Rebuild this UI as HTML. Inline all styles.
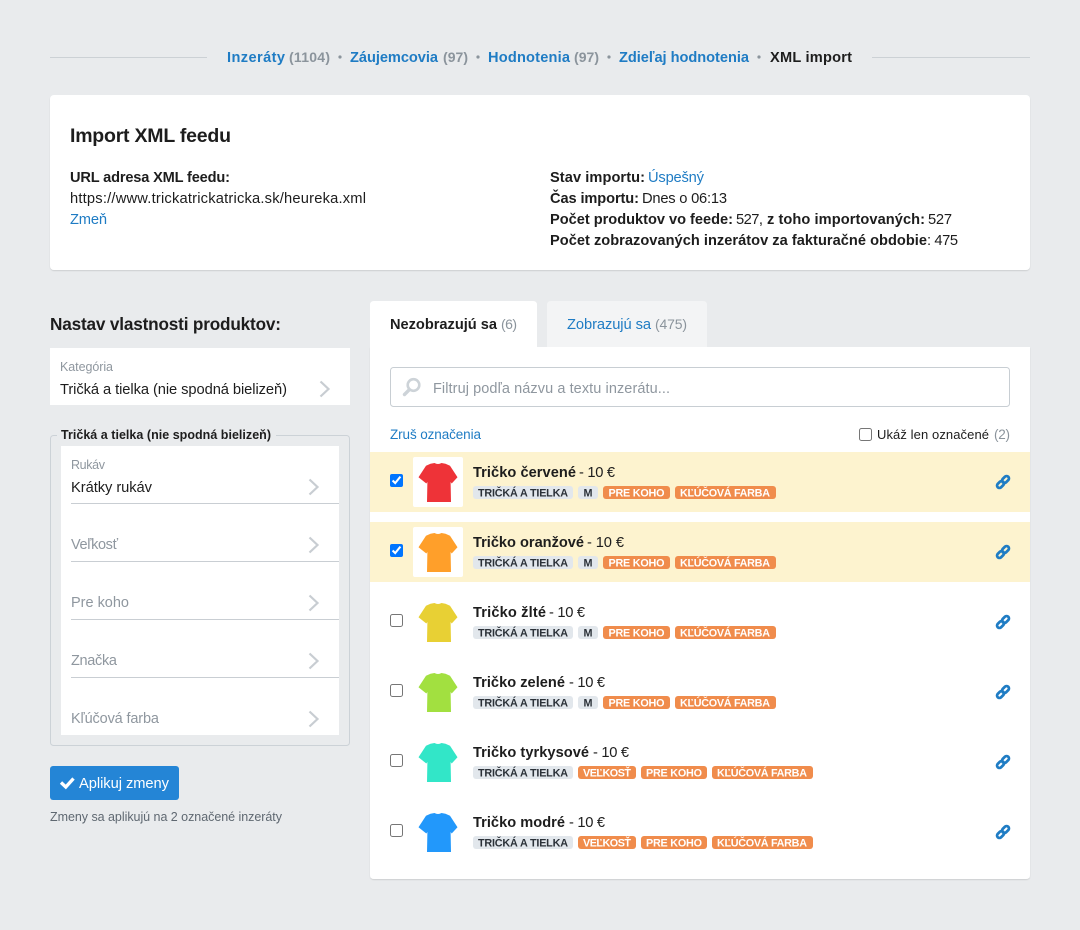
<!DOCTYPE html>
<html lang="sk"><head><meta charset="utf-8"><title>Import XML feedu</title>
<style>
html,body{margin:0;padding:0;width:1080px;height:930px;overflow:hidden;background:#e9ebed}
svg{position:absolute;left:0;top:0}
text{font-family:"Liberation Sans",sans-serif;font-size:14.7px;fill:#1d1d1d}
.b{font-weight:700;font-size:14.6px}
.l{fill:#1f7cc4}
.g{fill:#8b949c;font-size:14px}
.s{font-size:12.5px}
.t{font-size:10.8px;font-weight:700;fill:#2b3138}
.o{font-size:10.8px;font-weight:700;fill:#fff}
.p{fill:#8f979f;font-size:14.5px}
.chev{fill:none;stroke:#c8cdd2;stroke-width:2.2}
.cbx{position:absolute;margin:0;width:13px;height:13px;left:390px}
</style></head><body>
<svg width="1080" height="930" viewBox="0 0 1080 930" xmlns="http://www.w3.org/2000/svg">
<defs>
<symbol id="shirt" viewBox="0 0 50 50" overflow="visible"><path d="M17.5 6.8 L21.5 6 Q25 8 28.5 6 L32.5 6.8 L37 8.8 L44.5 20.3 L38.7 26.5 L37.6 25 L38 45 L14 45 L14.4 25 L13.3 26.5 L5.5 20.3 L13 8.8Z"/></symbol>
<symbol id="link" viewBox="0 0 14 14" overflow="visible"><g fill="none" stroke="#1f7cc4" stroke-width="2.7"><rect x="5.6" y="2.1" width="7.8" height="4.8" rx="2.4" transform="rotate(-45 9.5 4.5)"/><rect x="0.6" y="7.1" width="7.8" height="4.8" rx="2.4" transform="rotate(-45 4.5 9.5)"/></g></symbol>
<symbol id="tags1" viewBox="0 0 400 20" overflow="visible"><rect x="0" y="0" width="100" height="13" rx="3" fill="#e2e7ec"/><text class="t" x="5" y="10.5" textLength="90">TRIČKÁ A TIELKA</text><rect x="105" y="0" width="20" height="13" rx="3" fill="#e2e7ec"/><text class="t" x="110.5" y="10.5" textLength="9.5">M</text><rect x="130" y="0" width="67" height="13" rx="3" fill="#f08c4c"/><text class="o" x="135.5" y="10.5" textLength="56">PRE KOHO</text><rect x="202" y="0" width="101" height="13" rx="3" fill="#f08c4c"/><text class="o" x="207" y="10.5" textLength="90">KĽÚČOVÁ FARBA</text></symbol>
<symbol id="tags2" viewBox="0 0 400 20" overflow="visible"><rect x="0" y="0" width="100" height="13" rx="3" fill="#e2e7ec"/><text class="t" x="5" y="10.5" textLength="90">TRIČKÁ A TIELKA</text><rect x="105" y="0" width="58" height="13" rx="3" fill="#f08c4c"/><text class="o" x="110" y="10.5" textLength="48">VEĽKOSŤ</text><rect x="168" y="0" width="66" height="13" rx="3" fill="#f08c4c"/><text class="o" x="173" y="10.5" textLength="56">PRE KOHO</text><rect x="239" y="0" width="101" height="13" rx="3" fill="#f08c4c"/><text class="o" x="244" y="10.5" textLength="90">KĽÚČOVÁ FARBA</text></symbol>
<filter id="sh" x="-2%" y="-5%" width="104%" height="110%"><feDropShadow dx="0" dy="1" stdDeviation="0.6" flood-color="#000" flood-opacity=".12"/></filter>
</defs>

<!-- top nav -->
<rect x="50" y="57" width="157" height="1" fill="#ccd1d5"/><rect x="872" y="57" width="158" height="1" fill="#ccd1d5"/>
<text class="b l" x="227" y="62" textLength="58">Inzeráty</text><text class="b g" x="289" y="62" textLength="41">(1104)</text>
<circle cx="340" cy="57" r="1.6" fill="#8b949c"/>
<text class="b l" x="350" y="62" textLength="88">Záujemcovia</text><text class="b g" x="443" y="62" textLength="25">(97)</text>
<circle cx="478" cy="57" r="1.6" fill="#8b949c"/>
<text class="b l" x="488" y="62" textLength="82">Hodnotenia</text><text class="b g" x="574" y="62" textLength="25">(97)</text>
<circle cx="609" cy="57" r="1.6" fill="#8b949c"/>
<text class="b l" x="619" y="62" textLength="130">Zdieľaj hodnotenia</text>
<circle cx="759" cy="57" r="1.6" fill="#8b949c"/>
<text class="b" x="770" y="62" textLength="82">XML import</text>

<!-- import card -->
<rect x="50" y="95" width="980" height="175" rx="4" fill="#fff" filter="url(#sh)"/>
<text class="b" style="font-size:19.5px" x="70" y="142" textLength="161">Import XML feedu</text>
<text class="b" x="70" y="182" textLength="160">URL adresa XML feedu:</text>
<text x="70" y="203" textLength="296">https://www.trickatrickatricka.sk/heureka.xml</text>
<text class="l" x="70" y="224" textLength="37">Zmeň</text>
<text class="b" x="550" y="182" textLength="95">Stav importu:</text><text class="l" x="648" y="182" textLength="56">Úspešný</text>
<text class="b" x="550" y="203" textLength="89">Čas importu:</text><text x="642" y="203" textLength="85">Dnes o 06:13</text>
<text class="b" x="550" y="224" textLength="183">Počet produktov vo feede:</text><text x="736" y="224" textLength="27">527,</text><text class="b" x="767" y="224" textLength="158">z toho importovaných:</text><text x="928" y="224" textLength="24">527</text>
<text class="b" x="550" y="245" textLength="377">Počet zobrazovaných inzerátov za fakturačné obdobie</text><text x="927" y="245" textLength="31">: 475</text>

<!-- left column -->
<text class="b" style="font-size:17.2px" x="50" y="330" textLength="231">Nastav vlastnosti produktov:</text>
<rect x="50" y="348" width="300" height="57" fill="#fff"/>
<text class="s p" style="font-size:12.5px" x="60" y="371" textLength="53">Kategória</text>
<text x="60" y="394" textLength="227">Tričká a tielka (nie spodná bielizeň)</text>
<path class="chev" d="M320.5 381.5 L328.5 389 L320.5 396.5"/>

<rect x="50.5" y="435.5" width="299" height="310" rx="3" fill="none" stroke="#ccd2d7"/>
<rect x="57" y="428" width="219" height="14" fill="#e9ebed"/>
<text class="b" style="font-size:12.5px" x="61" y="439" textLength="210">Tričká a tielka (nie spodná bielizeň)</text>
<rect x="61" y="446" width="278" height="289" fill="#fff"/>
<text class="s p" style="font-size:12.5px" x="71" y="469" textLength="34">Rukáv</text>
<text x="71" y="492" textLength="81">Krátky rukáv</text>
<rect x="71" y="503" width="268" height="1" fill="#c9ced3"/>
<path class="chev" d="M309.5 479.5 L317.5 487 L309.5 494.5"/>
<text class="p" x="71" y="549" textLength="47">Veľkosť</text>
<rect x="71" y="561" width="268" height="1" fill="#c9ced3"/>
<path class="chev" d="M309.5 537.5 L317.5 545 L309.5 552.5"/>
<text class="p" x="71" y="607" textLength="58">Pre koho</text>
<rect x="71" y="619" width="268" height="1" fill="#c9ced3"/>
<path class="chev" d="M309.5 595.5 L317.5 603 L309.5 610.5"/>
<text class="p" x="71" y="665" textLength="46">Značka</text>
<rect x="71" y="677" width="268" height="1" fill="#c9ced3"/>
<path class="chev" d="M309.5 653.5 L317.5 661 L309.5 668.5"/>
<text class="p" x="71" y="723" textLength="88">Kľúčová farba</text>
<path class="chev" d="M309.5 711.5 L317.5 719 L309.5 726.5"/>

<rect x="50" y="766" width="129" height="34" rx="3" fill="#2485d6"/>
<path d="M61 782.5 L65.8 787 L73.5 778.5" fill="none" stroke="#fff" stroke-width="3.3"/>
<text style="fill:#fff" x="79" y="788" textLength="90">Aplikuj zmeny</text>
<text class="s" style="fill:#5f6871" x="50" y="821" textLength="232">Zmeny sa aplikujú na 2 označené inzeráty</text>

<!-- tabs -->
<path d="M370 347 V305 Q370 301 374 301 H533 Q537 301 537 305 V347Z" fill="#fff"/>
<path d="M547 347 V305 Q547 301 551 301 H703 Q707 301 707 305 V347Z" fill="#f3f4f5"/>
<text class="b" x="390" y="329" textLength="107">Nezobrazujú sa</text><text class="g" x="501" y="329" textLength="16">(6)</text>
<text class="l" x="567" y="329" textLength="84">Zobrazujú sa</text><text class="g" x="655" y="329" textLength="32">(475)</text>

<!-- list card -->
<path d="M370 347 H1030 V875 Q1030 879 1026 879 H374 Q370 879 370 875Z" fill="#fff" filter="url(#sh)"/>
<rect x="390.5" y="367.5" width="619" height="39" rx="3" fill="#fff" stroke="#c8ced3"/>
<circle cx="413.5" cy="385" r="5.8" fill="none" stroke="#cdd3d8" stroke-width="2.6"/>
<path d="M409 390 L404.5 394.5" stroke="#cdd3d8" stroke-width="3.4" stroke-linecap="round"/>
<text class="p" x="433" y="393" textLength="237">Filtruj podľa názvu a textu inzerátu...</text>
<text class="l" style="font-size:13.5px" x="390" y="439" textLength="91">Zruš označenia</text>
<text style="font-size:13px" x="877" y="439" textLength="112">Ukáž len označené</text><text class="g" style="font-size:13.5px" x="994" y="439" textLength="16">(2)</text>

<!-- rows -->
<rect x="370" y="452" width="660" height="60" fill="#fdf3cf"/>
<rect x="370" y="522" width="660" height="60" fill="#fdf3cf"/>
<rect x="413" y="457" width="50" height="50" rx="2" fill="#fff"/>
<rect x="413" y="527" width="50" height="50" rx="2" fill="#fff"/>
<use href="#shirt" x="413" y="457" width="50" height="50" fill="#ee3338"/>
<use href="#shirt" x="413" y="527" width="50" height="50" fill="#ff9f2a"/>
<use href="#shirt" x="413" y="597" width="50" height="50" fill="#e8d034"/>
<use href="#shirt" x="413" y="667" width="50" height="50" fill="#a2e040"/>
<use href="#shirt" x="413" y="737" width="50" height="50" fill="#32e6c8"/>
<use href="#shirt" x="413" y="807" width="50" height="50" fill="#2298fb"/>

<text class="b" x="473" y="477" textLength="103">Tričko červené</text><text x="579" y="477" textLength="36">- 10 €</text>
<text class="b" x="473" y="547" textLength="111">Tričko oranžové</text><text x="587" y="547" textLength="37">- 10 €</text>
<text class="b" x="473" y="617" textLength="73">Tričko žlté</text><text x="549" y="617" textLength="36">- 10 €</text>
<text class="b" x="473" y="687" textLength="92">Tričko zelené</text><text x="569" y="687" textLength="36">- 10 €</text>
<text class="b" x="473" y="757" textLength="116">Tričko tyrkysové</text><text x="593" y="757" textLength="36">- 10 €</text>
<text class="b" x="473" y="827" textLength="92">Tričko modré</text><text x="569" y="827" textLength="36">- 10 €</text>

<use href="#tags1" x="473" y="486" width="400" height="20"/>
<use href="#tags1" x="473" y="556" width="400" height="20"/>
<use href="#tags1" x="473" y="626" width="400" height="20"/>
<use href="#tags1" x="473" y="696" width="400" height="20"/>
<use href="#tags2" x="473" y="766" width="400" height="20"/>
<use href="#tags2" x="473" y="836" width="400" height="20"/>

<use href="#link" x="996" y="475" width="14" height="14"/>
<use href="#link" x="996" y="545" width="14" height="14"/>
<use href="#link" x="996" y="615" width="14" height="14"/>
<use href="#link" x="996" y="685" width="14" height="14"/>
<use href="#link" x="996" y="755" width="14" height="14"/>
<use href="#link" x="996" y="825" width="14" height="14"/>
</svg>
<input type="checkbox" class="cbx" style="left:859px;top:428px">
<input type="checkbox" class="cbx" style="top:474px" checked>
<input type="checkbox" class="cbx" style="top:544px" checked>
<input type="checkbox" class="cbx" style="top:614px">
<input type="checkbox" class="cbx" style="top:684px">
<input type="checkbox" class="cbx" style="top:754px">
<input type="checkbox" class="cbx" style="top:824px">
</body></html>
